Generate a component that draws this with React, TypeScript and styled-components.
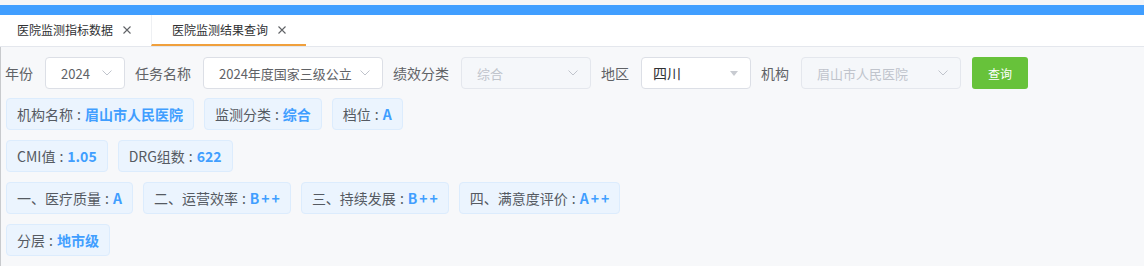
import React, { FC } from 'react';
import styled, { createGlobalStyle } from 'styled-components';

const GlobalStyle = createGlobalStyle`
  html, body {
    margin: 0;
    padding: 0;
    background: #f7f8fa;
    font-family: "Noto Sans CJK SC", "Noto Sans", sans-serif;
  }
`;

const Page = styled.div`
  width: 1144px;
  height: 266px;
  display: flex;
  flex-direction: column;
  background: #f7f8fa;
  overflow: hidden;
`;

const TopStrip = styled.div`
  height: 5px;
  background: #f4f5f7;
`;

const BlueBar = styled.div`
  height: 10px;
  background: #409eff;
`;

const TabBar = styled.div`
  display: flex;
  height: 31px;
  background: #fff;
  border-bottom: 1px solid #e4e7ed;
`;

const Tab = styled.div<{ $active?: boolean }>`
  display: flex;
  align-items: center;
  padding: 0 20px 0 ${(p) => (p.$active ? '20px' : '17px')};
  font-size: 12px;
  color: #303133;
  box-sizing: border-box;
  border-bottom: 2px solid ${(p) => (p.$active ? '#f0a03c' : 'transparent')};
  border-left: ${(p) => (p.$active ? '1px solid #eef0f3' : 'none')};
`;

const CloseIcon: FC = () => (
  <svg width="8" height="8" viewBox="0 0 8 8" style={{ marginLeft: 10 }}>
    <path d="M0.5 0.5 L7.5 7.5 M7.5 0.5 L0.5 7.5" stroke="#606266" strokeWidth="1.1" />
  </svg>
);

const Body = styled.div`
  flex: 1;
  display: flex;
  flex-direction: column;
  gap: 10px;
  padding: 10px 0 0 5px;
  border-left: 1px solid #c8cacd;
`;

const FormRow = styled.div`
  display: flex;
  align-items: center;
  height: 32px;
  margin-left: -1px;
  margin-bottom: -1px;
`;

const Label = styled.span`
  font-size: 14px;
  color: #606266;
  margin: 0 12px 0 10px;

  &:first-child {
    margin-left: 0;
  }
`;

const Select = styled.div<{ $w: number; $disabled?: boolean; $big?: boolean }>`
  width: ${(p) => p.$w}px;
  height: 32px;
  box-sizing: border-box;
  display: flex;
  align-items: center;
  justify-content: space-between;
  gap: 6px;
  padding: 0 12px 0 ${(p) => (p.$big ? 11 : 15)}px;
  border: 1px solid ${(p) => (p.$disabled ? '#e4e7ed' : '#dcdfe6')};
  border-radius: 4px;
  background: ${(p) => (p.$disabled ? '#f5f7fa' : '#fff')};
  color: ${(p) => (p.$disabled ? '#c0c4cc' : p.$big ? '#303133' : '#606266')};
  font-size: ${(p) => (p.$big ? 14 : 13)}px;
  overflow: hidden;
`;

const SelectText = styled.span`
  white-space: nowrap;
  overflow: hidden;
  flex: 1;
  min-width: 0;
`;

const QueryButton = styled.button`
  margin-left: 11px;
  width: 56px;
  height: 32px;
  border: none;
  border-radius: 3px;
  background: #67c23a;
  color: #fff;
  font-family: inherit;
  font-size: 12px;
`;

const InfoRow = styled.div`
  display: flex;
  gap: 10px;
`;

const InfoTag = styled.div`
  height: 32px;
  box-sizing: border-box;
  display: flex;
  align-items: center;
  padding: 0 10px;
  border: 1px solid #dcecfd;
  border-radius: 4px;
  background: #ebf4fe;
  font-size: 14px;
  color: #555a62;
  white-space: nowrap;
`;

const Colon = styled.span`
  margin: 0 4px;
`;

const Value = styled.b`
  color: #409eff;
  font-weight: 700;
`;

const Plus = styled.span`
  margin-left: 2px;
`;

const Chevron: FC = () => (
  <svg width="10" height="6" viewBox="0 0 10 6" fill="none">
    <path d="M0.5 0.5 L5 5 L9.5 0.5" stroke="#c0c4cc" strokeWidth="1" />
  </svg>
);

const Caret: FC = () => (
  <svg width="8" height="5" viewBox="0 0 8 5">
    <path d="M0 0 L8 0 L4 5 Z" fill="#c8cbd1" />
  </svg>
);

type Item = { label: string; value: string };

const rows: Item[][] = [
  [
    { label: '机构名称', value: '眉山市人民医院' },
    { label: '监测分类', value: '综合' },
    { label: '档位', value: 'A' },
  ],
  [
    { label: 'CMI值', value: '1.05' },
    { label: 'DRG组数', value: '622' },
  ],
  [
    { label: '一、医疗质量', value: 'A' },
    { label: '二、运营效率', value: 'B++' },
    { label: '三、持续发展', value: 'B++' },
    { label: '四、满意度评价', value: 'A++' },
  ],
  [{ label: '分层', value: '地市级' }],
];

const renderValue = (v: string) => {
  const base = v.replace(/\+/g, '');
  const pluses = v.length - base.length;
  return (
    <>
      {base}
      {Array.from({ length: pluses }).map((_, i) => (
        <Plus key={i}>+</Plus>
      ))}
    </>
  );
};

const App: FC = () => {
  return (
    <Page>
      <GlobalStyle />
      <TopStrip />
      <BlueBar />
      <TabBar>
        <Tab>
          医院监测指标数据
          <CloseIcon />
        </Tab>
        <Tab $active>
          医院监测结果查询
          <CloseIcon />
        </Tab>
      </TabBar>
      <Body>
        <FormRow>
          <Label>年份</Label>
          <Select $w={80}>
            <SelectText>2024</SelectText>
            <Chevron />
          </Select>
          <Label>任务名称</Label>
          <Select $w={180}>
            <SelectText>2024年度国家三级公立</SelectText>
            <Chevron />
          </Select>
          <Label>绩效分类</Label>
          <Select $w={130} $disabled>
            <SelectText>综合</SelectText>
            <Chevron />
          </Select>
          <Label>地区</Label>
          <Select $w={110} $big>
            <SelectText>四川</SelectText>
            <Caret />
          </Select>
          <Label>机构</Label>
          <Select $w={160} $disabled>
            <SelectText>眉山市人民医院</SelectText>
            <Chevron />
          </Select>
          <QueryButton>查询</QueryButton>
        </FormRow>
        {rows.map((row, i) => (
          <InfoRow key={i}>
            {row.map((item) => (
              <InfoTag key={item.label}>
                {item.label}
                <Colon>:</Colon>
                <Value>{renderValue(item.value)}</Value>
              </InfoTag>
            ))}
          </InfoRow>
        ))}
      </Body>
    </Page>
  );
};

export default App;
